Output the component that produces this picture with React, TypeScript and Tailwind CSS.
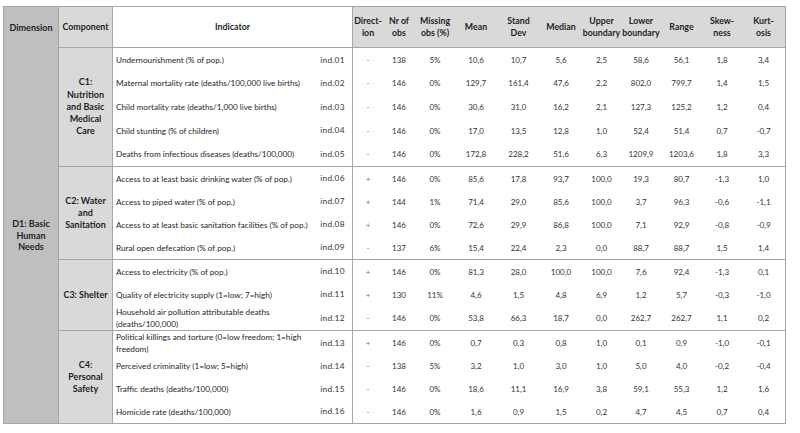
import React from "react";

type Row = { name: React.ReactNode; code: string; v: string[] };

const groups: { comp: React.ReactNode; h: string; rows: Row[] }[] = [
  {
    comp: (<>C1:<br />Nutrition<br />and Basic<br />Medical<br />Care</>),
    h: "h-[119px]",
    rows: [
      { name: "Undernourishment (% of pop.)", code: "ind.01", v: ["-", "138", "5%", "10,6", "10,7", "5,6", "2,5", "58,6", "56,1", "1,8", "3,4"] },
      { name: "Maternal mortality rate (deaths/100,000 live births)", code: "ind.02", v: ["-", "146", "0%", "129,7", "161,4", "47,6", "2,2", "802,0", "799,7", "1,4", "1,5"] },
      { name: "Child mortality rate (deaths/1,000 live births)", code: "ind.03", v: ["-", "146", "0%", "30,6", "31,0", "16,2", "2,1", "127,3", "125,2", "1,2", "0,4"] },
      { name: "Child stunting (% of children)", code: "ind.04", v: ["-", "146", "0%", "17,0", "13,5", "12,8", "1,0", "52,4", "51,4", "0,7", "-0,7"] },
      { name: "Deaths from infectious diseases (deaths/100,000)", code: "ind.05", v: ["-", "146", "0%", "172,8", "228,2", "51,6", "6,3", "1209,9", "1203,6", "1,8", "3,3"] },
    ],
  },
  {
    comp: (<>C2: Water<br />and<br />Sanitation</>),
    h: "h-[93px]",
    rows: [
      { name: "Access to at least basic drinking water (% of pop.)", code: "ind.06", v: ["+", "146", "0%", "85,6", "17,8", "93,7", "100,0", "19,3", "80,7", "-1,3", "1,0"] },
      { name: "Access to piped water (% of pop.)", code: "ind.07", v: ["+", "144", "1%", "71,4", "29,0", "85,6", "100,0", "3,7", "96,3", "-0,6", "-1,1"] },
      { name: "Access to at least basic sanitation facilities (% of pop.)", code: "ind.08", v: ["+", "146", "0%", "72,6", "29,9", "86,8", "100,0", "7,1", "92,9", "-0,8", "-0,9"] },
      { name: "Rural open defecation (% of pop.)", code: "ind.09", v: ["-", "137", "6%", "15,4", "22,4", "2,3", "0,0", "88,7", "88,7", "1,5", "1,4"] },
    ],
  },
  {
    comp: (<>C3: Shelter</>),
    h: "h-[71px]",
    rows: [
      { name: "Access to electricity (% of pop.)", code: "ind.10", v: ["+", "146", "0%", "81,3", "28,0", "100,0", "100,0", "7,6", "92,4", "-1,3", "0,1"] },
      { name: "Quality of electricity supply (1=low; 7=high)", code: "ind.11", v: ["+", "130", "11%", "4,6", "1,5", "4,8", "6,9", "1,2", "5,7", "-0,3", "-1,0"] },
      { name: (<>Household air pollution attributable deaths<br />(deaths/100,000)</>), code: "ind.12", v: ["-", "146", "0%", "53,8", "66,3", "18,7", "0,0", "262,7", "262,7", "1,1", "0,2"] },
    ],
  },
  {
    comp: (<>C4:<br />Personal<br />Safety</>),
    h: "flex-1",
    rows: [
      { name: (<>Political killings and torture (0=low freedom; 1=high<br />freedom)</>), code: "ind.13", v: ["+", "146", "0%", "0,7", "0,3", "0,8", "1,0", "0,1", "0,9", "-1,0", "-0,1"] },
      { name: "Perceived criminality (1=low; 5=high)", code: "ind.14", v: ["-", "138", "5%", "3,2", "1,0", "3,0", "1,0", "5,0", "4,0", "-0,2", "-0,4"] },
      { name: "Traffic deaths (deaths/100,000)", code: "ind.15", v: ["-", "146", "0%", "18,6", "11,1", "16,9", "3,8", "59,1", "55,3", "1,2", "1,6"] },
      { name: "Homicide rate (deaths/100,000)", code: "ind.16", v: ["-", "146", "0%", "1,6", "0,9", "1,5", "0,2", "4,7", "4,5", "0,7", "0,4"] },
    ],
  },
];

const colW = [
  "w-[30px]", "w-[32px]", "w-[40px]", "w-[42px]", "w-[43px]", "w-[42px]",
  "w-[39px]", "w-[40px]", "w-[41px]", "w-[40px]", "w-[43px]",
];

const heads: React.ReactNode[] = [
  (<>Direct-<br />ion</>),
  (<>Nr of<br />obs</>),
  (<>Missing<br />obs (%)</>),
  "Mean",
  (<>Stand<br />Dev</>),
  "Median",
  (<>Upper<br />boundary</>),
  (<>Lower<br />boundary</>),
  "Range",
  (<>Skew-<br />ness</>),
  (<>Kurt-<br />osis</>),
];

export default function App() {
  return (
    <div
      className="w-[800px] h-[433px] bg-white pt-[6px] pl-[3px]"
      style={{ fontFamily: "Lato, 'Open Sans', sans-serif" }}
    >
      <div className="w-[783px] h-[418px] border border-[#a6a6a6] flex">
        {/* Dimension column */}
        <div className="w-[55px] shrink-0 bg-[#bfbfbf] border-r border-[#a6a6a6] flex flex-col text-[#1f1f1f] font-bold text-[9px] leading-[11.5px] text-center">
          <div className="h-[41px] flex items-center justify-center">Dimension</div>
          <div className="flex-1 flex items-center justify-center">
            D1: Basic<br />Human<br />Needs
          </div>
        </div>
        {/* Rest */}
        <div className="flex-1 flex flex-col">
          {/* Header */}
          <div className="h-[41px] shrink-0 flex border-b border-[#a6a6a6] text-[#1f1f1f] font-bold text-[8.8px] leading-[12px] text-center">
            <div className="w-[54px] shrink-0 bg-[#d9d9d9] border-r border-[#a6a6a6] flex items-center justify-center">
              Component
            </div>
            <div className="w-[240px] shrink-0 bg-white border-r border-[#a6a6a6] flex items-center justify-center">
              Indicator
            </div>
            <div className="flex-1 flex bg-[#d9d9d9]">
              {heads.map((h, i) => (
                <div key={i} className={`${colW[i]} shrink-0 flex items-center justify-center`}>
                  {h}
                </div>
              ))}
            </div>
          </div>
          {/* Groups */}
          {groups.map((g, gi) => (
            <div
              key={gi}
              className={`${g.h} flex ${gi < groups.length - 1 ? "border-b border-[#a6a6a6]" : ""}`}
            >
              <div className="w-[54px] shrink-0 bg-[#d9d9d9] border-r border-[#a6a6a6] flex items-center justify-center text-center font-bold text-[9px] leading-[12.3px] text-[#1f1f1f]">
                <div>{g.comp}</div>
              </div>
              <div className="flex-1 flex flex-col">
                {g.rows.map((r, ri) => (
                  <div key={ri} className="flex-1 flex items-stretch">
                    <div className="w-[200px] shrink-0 pl-[3px] flex items-center text-[8.2px] leading-[12px] text-[#262626] whitespace-nowrap">
                      <div>{r.name}</div>
                    </div>
                    <div className="w-[40px] shrink-0 border-r border-[#a6a6a6] flex items-center justify-center text-[8.3px] tracking-[0.3px] text-[#333333]">
                      {r.code}
                    </div>
                    {r.v.map((v, vi) => (
                      <div
                        key={vi}
                        className={`${colW[vi]} shrink-0 flex items-center justify-center text-[8px] ${vi === 0 ? "text-[#737373]" : "text-[#333333]"}`}
                      >
                        {v}
                      </div>
                    ))}
                  </div>
                ))}
              </div>
            </div>
          ))}
        </div>
      </div>
    </div>
  );
}
